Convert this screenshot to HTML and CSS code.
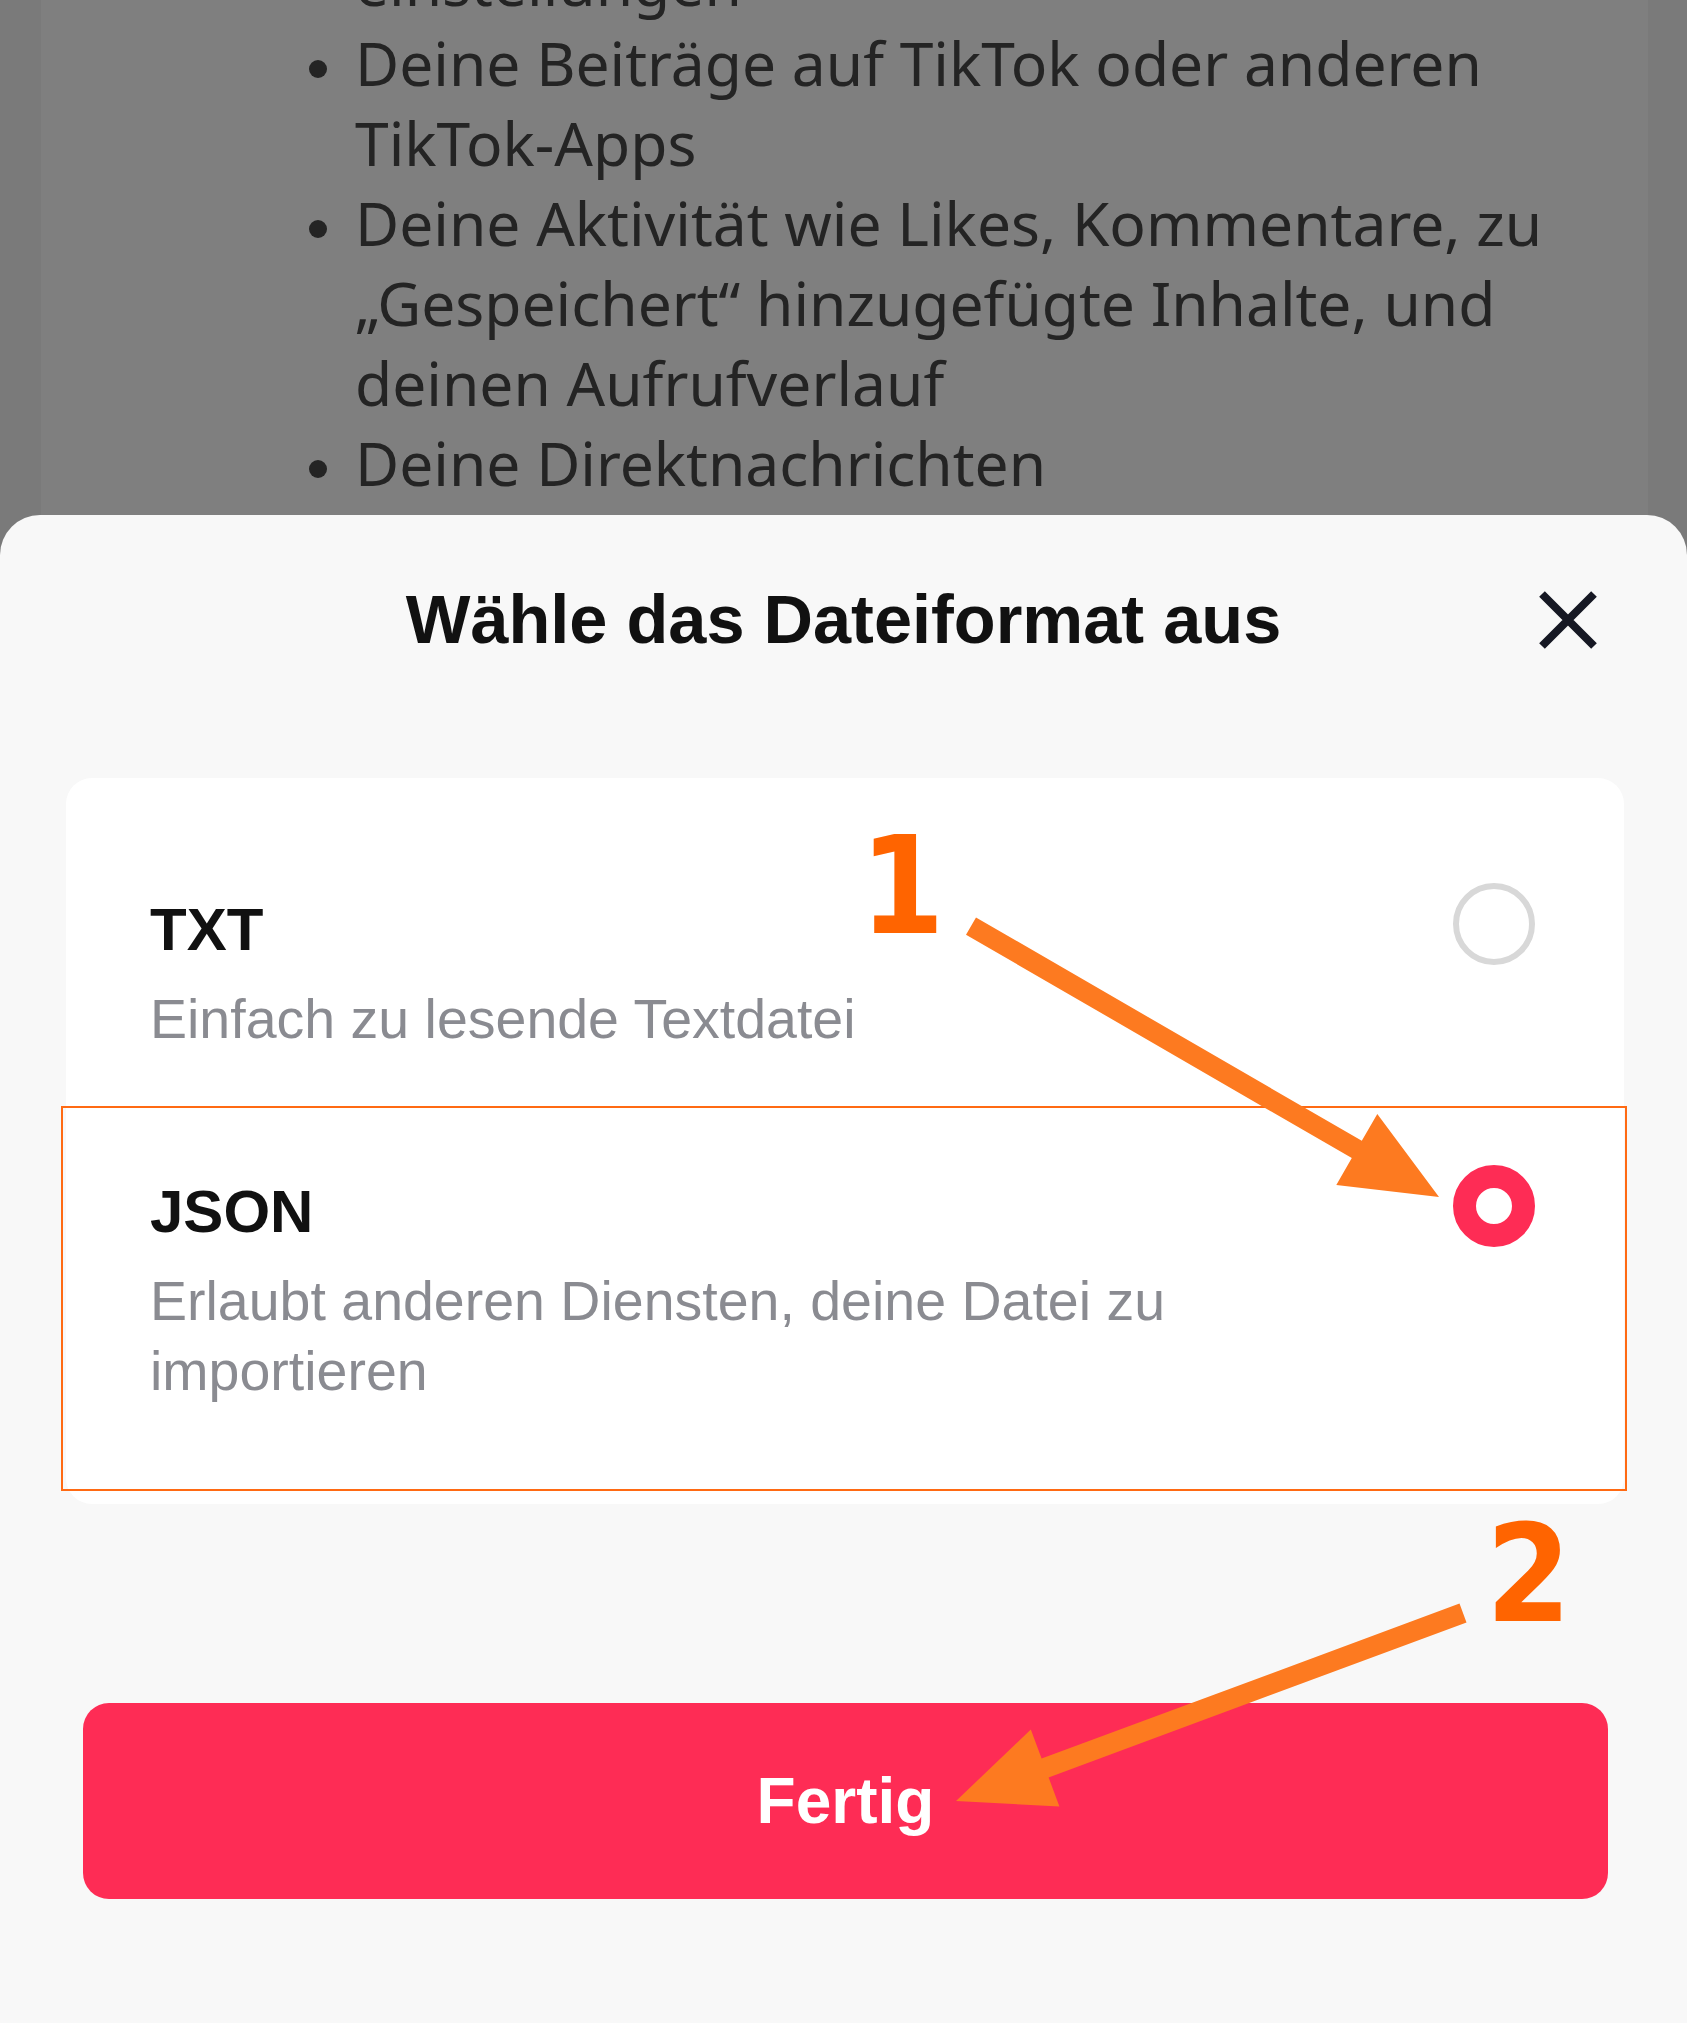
FILE: index.html
```html
<!DOCTYPE html>
<html lang="de">
<head>
<meta charset="utf-8">
<title>Dateiformat</title>
<link rel="stylesheet" href="styles.css">
</head>
<body>
<div class="screen">
  <div class="behind">
    <div class="behind-col">
      <ul class="list">
        <li><span class="dot"></span><span class="li-text">Deine Konto- und Datenschutz-<br>einstellungen</span></li>
        <li><span class="dot"></span><span class="li-text">Deine Beiträge auf TikTok oder anderen TikTok-Apps</span></li>
        <li><span class="dot"></span><span class="li-text">Deine Aktivität wie Likes, Kommentare, zu „Gespeichert“ hinzugefügte Inhalte, und deinen Aufrufverlauf</span></li>
        <li><span class="dot"></span><span class="li-text">Deine Direktnachrichten</span></li>
      </ul>
    </div>
  </div>

  <div class="sheet">
    <div class="header">
      <span></span>
      <h1 class="title">Wähle das Dateiformat aus</h1>
      <svg class="close" width="60" height="58" viewBox="0 0 60 58" aria-label="Schließen">
        <path d="M4 3 L56 55 M56 3 L4 55" stroke="#161823" stroke-width="8" fill="none"/>
      </svg>
    </div>

    <div class="card">
      <div class="row row-first">
        <div class="opt-text">
          <div class="opt-name">TXT</div>
          <div class="opt-desc">Einfach zu lesende Textdatei</div>
        </div>
        <span class="radio"></span>
      </div>
      <div class="row row-second">
        <div class="opt-text">
          <div class="opt-name">JSON</div>
          <div class="opt-desc">Erlaubt anderen Diensten, deine Datei zu importieren</div>
        </div>
        <span class="radio radio-on"></span>
      </div>
    </div>

    <button class="done">Fertig</button>
  </div>

  <div class="annotations">
    <div class="hl-box"></div>
    <svg class="arrows" width="1687" height="2023" viewBox="0 0 1687 2023">
      <polygon fill="#fd7a20" points="966,934.7 1351.8,1158.1 1336.3,1184.9 1439,1197 1377.3,1113.9 1361.8,1140.8 976,917.4"/>
      <polygon fill="#fd7a20" points="1459.5,1603.6 1041.6,1758.6 1030.8,1729.6 956,1801 1059.4,1806.5 1048.6,1777.4 1466.5,1622.4"/>
    </svg>
    <span class="num num-1">1</span>
    <span class="num num-2">2</span>
  </div>
</div>
</body>
</html>
```

FILE: styles.css
```css
* { box-sizing: border-box; }
html, body { margin: 0; padding: 0; }
body {
  width: 1687px;
  height: 2023px;
  overflow: hidden;
  background: #7a7a7a;
}
.screen {
  position: relative;
  width: 1687px;
  height: 2023px;
  overflow: hidden;
  background: #7a7a7a;
  display: flex;
  flex-direction: column;
}

/* dimmed page behind the sheet */
.behind {
  height: 515px;
  flex: none;
  overflow: hidden;
  display: flex;
}
.behind-col {
  margin: 0 39px 0 41px;
  flex: 1;
  background: #7f7f7f;
  overflow: hidden;
}
.list {
  list-style: none;
  margin: -137px 0 0 0;
  padding: 0 50px 0 268px;
  font-family: "Noto Sans", "Open Sans", sans-serif;
  font-size: 60.5px;
  line-height: 80px;
  color: #242424;
}
.list li {
  display: grid;
  grid-template-columns: 46px 1fr;
}
.dot {
  width: 18px;
  height: 18px;
  border-radius: 50%;
  background: #242424;
  margin-top: 37px;
}

/* bottom sheet */
.sheet {
  flex: 1;
  background: #f8f8f8;
  border-radius: 40px 40px 0 0;
  padding-top: 60px;
  display: flex;
  flex-direction: column;
  font-family: "Liberation Sans", Arial, sans-serif;
}
.header {
  display: grid;
  grid-template-columns: 1fr auto 1fr;
  align-items: center;
  padding: 0 89px;
  height: 90px;
}
.title {
  margin: 0;
  font-size: 68.5px;
  line-height: 90px;
  font-weight: 700;
  color: #111111;
  white-space: nowrap;
}
.close {
  justify-self: end;
  display: block;
}

.card {
  margin: 113px 0 0 66px;
  width: 1558px;
  background: #ffffff;
  border-radius: 26px;
}
.row {
  display: flex;
  align-items: flex-start;
  justify-content: space-between;
  padding-left: 84px;
  padding-right: 89px;
}
.row-first { padding-top: 112px; padding-bottom: 52px; }
.row-second { padding-top: 66px; padding-bottom: 98px; }
.opt-text { max-width: 1120px; }
.opt-name {
  font-size: 60px;
  line-height: 80px;
  font-weight: 700;
  color: #111111;
}
.opt-desc {
  margin-top: 14px;
  font-size: 55.5px;
  line-height: 70px;
  color: #8a8b91;
}
.radio {
  flex: none;
  width: 82px;
  height: 82px;
  border-radius: 50%;
  border: 6px solid #d8d8d8;
  margin-top: -7px;
}
.radio-on {
  border: 23px solid #fe2c55;
  background: #ffffff;
}

.done {
  margin: 199px 0 0 83px;
  width: 1525px;
  height: 196px;
  border: none;
  border-radius: 26px;
  background: #fe2c55;
  color: #ffffff;
  font-family: "Liberation Sans", Arial, sans-serif;
  font-size: 64px;
  font-weight: 700;
  padding: 0;
}

/* screenshot annotations */
.annotations {
  position: absolute;
  inset: 0;
  pointer-events: none;
}
.hl-box {
  position: absolute;
  left: 61px;
  top: 1106px;
  width: 1566px;
  height: 385px;
  border: 2px solid #ff6a13;
}
.arrows {
  position: absolute;
  left: 0;
  top: 0;
}
.num {
  position: absolute;
  font-family: "DejaVu Sans Condensed", "DejaVu Sans", sans-serif;
  font-weight: 700;
  line-height: 1;
  color: #ff6400;
}
.num-1 { left: 860px; top: 819px; font-size: 135px; }
.num-2 { left: 1486px; top: 1506px; font-size: 136px; }
```
